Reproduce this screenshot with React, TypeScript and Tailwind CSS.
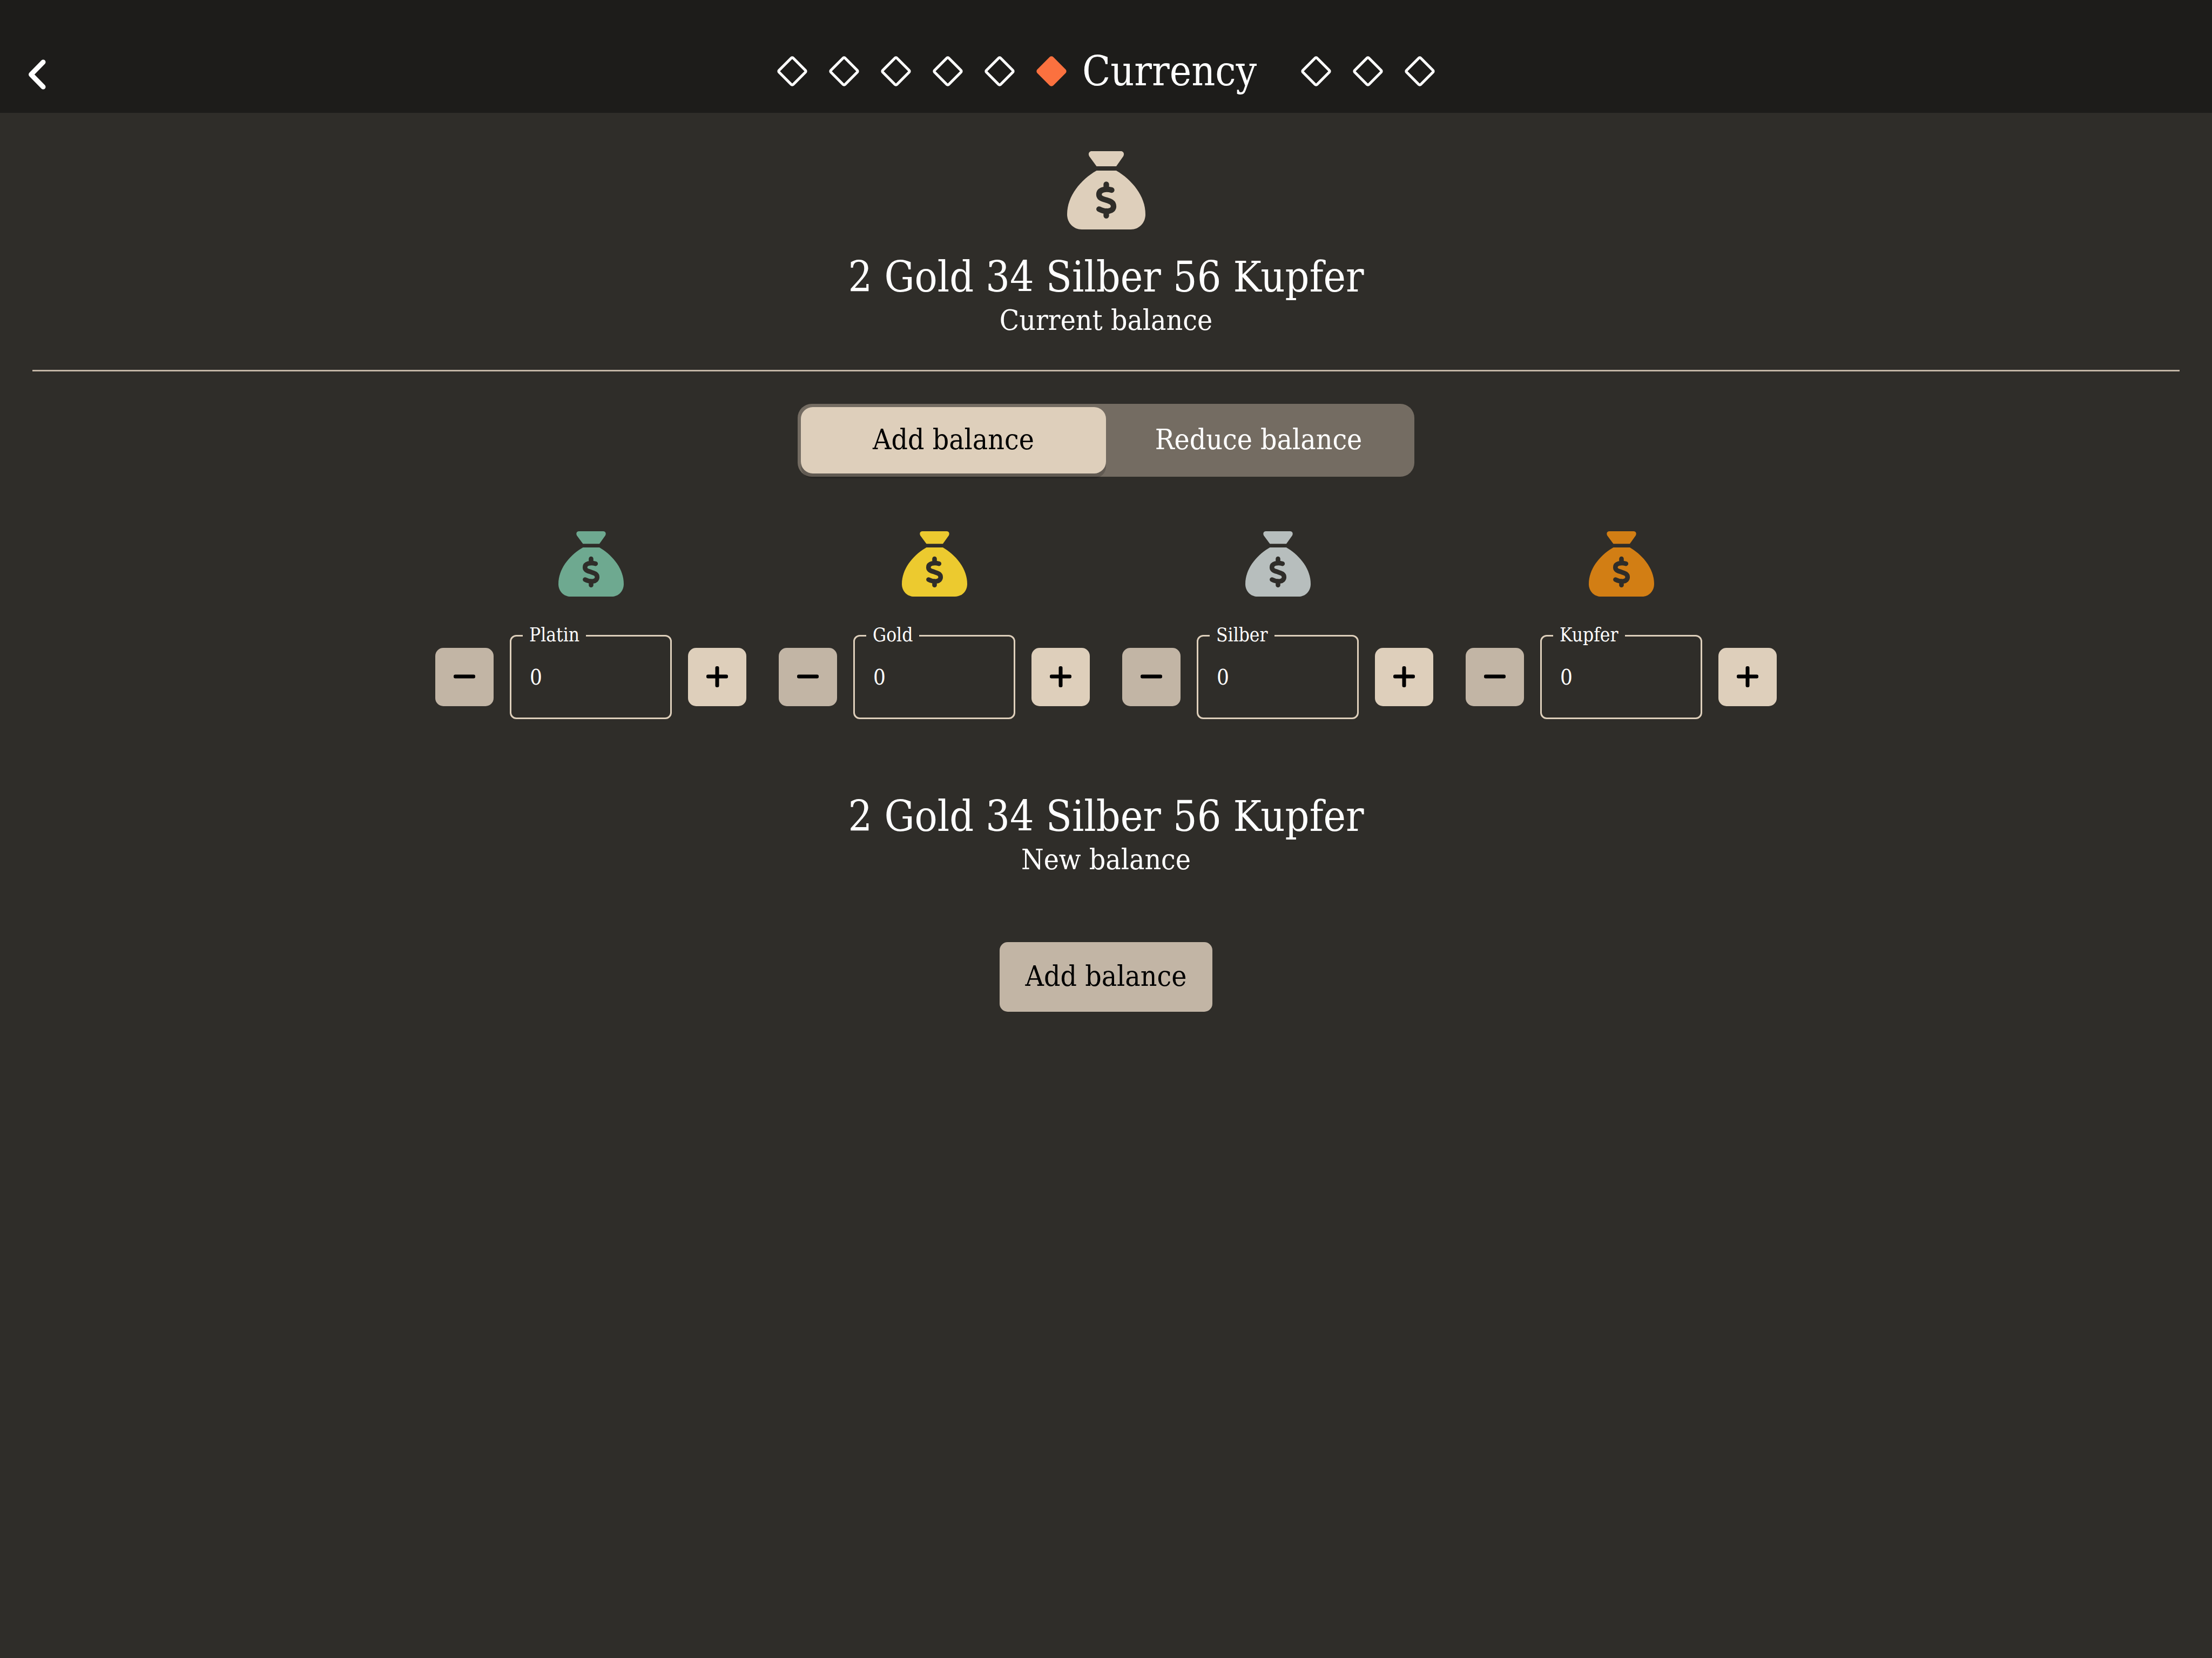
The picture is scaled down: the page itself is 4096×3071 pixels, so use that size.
import React, { useState } from "react";

function MoneyBag({ className }: { className: string }) {
  return (
    <svg viewBox="0 0 145 145" className={className} aria-hidden="true">
      <path
        fill="currentColor"
        d="M45.500 0H99.500C104.500 0 106.500 5 104 9.500L91 28H54.500L41 9.500C38.500 5 40.500 0 45.500 0Z"
      />
      <path
        fill="currentColor"
        d="M54.500 36H91C120 53 145 83 145 117C145 133 133 145 118 145H27C12 145 0 133 0 117C0 83 25 53 54.500 36Z"
      />
      <path
        fill="none"
        stroke="#2f2d29"
        strokeWidth="10.300"
        strokeLinecap="round"
        strokeLinejoin="round"
        d="M72.500 61.300V70M72.500 111V119.500M82.500 72C72 69 59 71 59 80C59 87 65 88.300 72.500 90.500C80 92.700 86 95 86 102C86 112 72 114 59.200 107.300"
      />
    </svg>
  );
}

function Diamond({ active = false }: { active?: boolean }) {
  return (
    <button
      type="button"
      aria-label={active ? "Current page" : "Go to page"}
      className={
        active
          ? "size-[42px] shrink-0 rotate-45 rounded-[5px] bg-[#fb713f]"
          : "size-[42px] shrink-0 rotate-45 rounded-[5px] border-[5px] border-white"
      }
    />
  );
}

function Balance({ amount, caption }: { amount: string; caption: string }) {
  return (
    <div className="text-center">
      <h2 className="text-[78px] leading-[96px]">{amount}</h2>
      <p className="text-[53px] leading-[64px]">{caption}</p>
    </div>
  );
}

function CoinField({ name, color }: { name: string; color: string }) {
  const [value, setValue] = useState("0");
  const id = "coin-" + name;
  const amount = Number(value) || 0;
  return (
    <div className="flex flex-col items-center gap-[71px]">
      <div className={color}>
        <MoneyBag className="size-[121px]" />
      </div>
      <div className="flex items-center gap-[30px]">
        <button
          type="button"
          aria-label={"Less " + name}
          onClick={() => setValue(String(Math.max(0, amount - 1)))}
          className="flex size-[108px] items-center justify-center rounded-[15px] bg-[#c2b5a5] text-black"
        >
          <svg viewBox="0 0 40 40" className="size-[40px]" aria-hidden="true">
            <rect y="15.500" width="40" height="7" rx="3" fill="currentColor" />
          </svg>
        </button>
        <div className="relative">
          <label
            htmlFor={id}
            className="absolute top-0 left-[24px] -translate-y-1/2 bg-[#2f2d29] px-[12px] text-[35px] leading-[36px]"
          >
            {name}
          </label>
          <input
            id={id}
            inputMode="numeric"
            value={value}
            onChange={(e) => setValue(e.target.value)}
            className="block h-[156px] w-[300px] rounded-[12px] border-[3px] border-[#decfbb] bg-transparent px-[34px] text-[40px] leading-[48px] outline-none"
          />
        </div>
        <button
          type="button"
          aria-label={"More " + name}
          onClick={() => setValue(String(amount + 1))}
          className="flex size-[108px] items-center justify-center rounded-[15px] bg-[#decfbb] text-black"
        >
          <svg viewBox="0 0 40 40" className="size-[40px]" aria-hidden="true">
            <rect y="15.500" width="40" height="7" rx="3" fill="currentColor" />
            <rect x="16.500" y="0" width="7" height="39" rx="3" fill="currentColor" />
          </svg>
        </button>
      </div>
    </div>
  );
}

const coins = [
  { name: "Platin", color: "text-[#6ea990]" },
  { name: "Gold", color: "text-[#ecca2f]" },
  { name: "Silber", color: "text-[#b7bebd]" },
  { name: "Kupfer", color: "text-[#d27e14]" },
];

export default function App() {
  const [mode, setMode] = useState("add");
  const tab = "flex-1 rounded-[22px] pb-[4px] text-[53px] leading-[64px]";
  const on = " bg-[#decfbb] text-black shadow-[0_9px_0_rgba(0,0,0,0.16)]";
  return (
    <div className="min-h-screen bg-[#2f2d29] font-['DejaVu_Serif_Condensed','DejaVu_Serif',serif] text-white">
      <header className="grid h-[209px] grid-cols-[1fr_auto_1fr] items-center bg-[#1d1c1a] px-[41px] pt-[54px]">
        <button type="button" aria-label="Back" className="mt-[12px] size-[56px]">
          <svg viewBox="0 0 56 56" className="size-[56px]" aria-hidden="true">
            <path
              d="M39 5L16.500 28L39 51"
              fill="none"
              stroke="currentColor"
              strokeWidth="9"
              strokeLinecap="round"
              strokeLinejoin="round"
            />
          </svg>
        </button>
        <nav aria-label="Pages" className="flex items-center">
          <div className="flex gap-[54px]">
            <Diamond />
            <Diamond />
            <Diamond />
            <Diamond />
            <Diamond />
            <Diamond active />
          </div>
          <h1 className="w-[448px] pl-[36px] text-[76px] leading-[96px]">Currency</h1>
          <div className="flex gap-[54px]">
            <Diamond />
            <Diamond />
            <Diamond />
          </div>
        </nav>
      </header>

      <main className="flex flex-col items-center px-[60px] pt-[71px]">
        <div className="mb-[40px] text-[#decfbb]">
          <MoneyBag className="size-[145px]" />
        </div>
        <Balance amount="2 Gold 34 Silber 56 Kupfer" caption="Current balance" />
        <hr className="mt-[60px] mb-[60px] w-full border-t-[3px] border-[#c2b5a5]" />

        <div className="flex h-[135px] w-[1142px] rounded-[26px] bg-[#746c62] p-[6px]">
          <button
            type="button"
            aria-pressed={mode === "add"}
            onClick={() => setMode("add")}
            className={tab + (mode === "add" ? on : "")}
          >
            Add balance
          </button>
          <button
            type="button"
            aria-pressed={mode === "reduce"}
            onClick={() => setMode("reduce")}
            className={tab + (mode === "reduce" ? on : "")}
          >
            Reduce balance
          </button>
        </div>

        <div className="mt-[101px] mb-[132px] flex flex-wrap justify-center gap-[60px]">
          {coins.map((coin) => (
            <CoinField key={coin.name} name={coin.name} color={coin.color} />
          ))}
        </div>

        <Balance amount="2 Gold 34 Silber 56 Kupfer" caption="New balance" />
        <button
          type="button"
          className="mt-[121px] h-[129px] rounded-[15px] bg-[#c2b5a5] px-[48px] pb-[4px] text-[53px] leading-[64px] text-black"
        >
          Add balance
        </button>
      </main>
    </div>
  );
}
